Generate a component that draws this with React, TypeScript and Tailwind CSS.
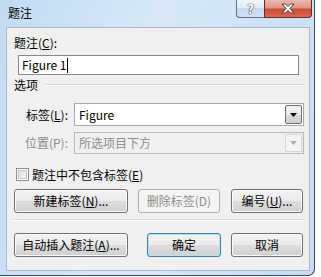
const btn =
  'flex items-center justify-center h-[24px] rounded-[3px] border border-[#707070] bg-[linear-gradient(#f3f3f3_0%,#ebebeb_50%,#dddddd_50%,#d0d0d0_100%)] shadow-[inset_0_0_0_1px_#fbfbfb] text-black'

export default function App() {
  return (
    <div className="w-[321px] h-[277px] bg-white overflow-hidden font-['Noto_Sans_CJK_SC','Liberation_Sans',sans-serif]">
      {/* window frame */}
      <div className="w-[315px] h-[276px] rounded-br-[7px] border-r border-b border-[#404a57] bg-[linear-gradient(100deg,#c3dbf1_0%,#d9e9f8_45%,#c6ddf2_100%)] flex flex-col">
        {/* title bar */}
        <div className="h-[28px] flex items-start shrink-0">
          <span className="ml-[8px] mt-[6px] text-[12px] leading-[14px] text-black">题注</span>
          <div className="ml-auto mr-[2px] flex">
            <div className="w-[28px] h-[18px] rounded-bl-[4px] border border-t-0 border-r-0 border-[#5b6f88] bg-[linear-gradient(#f2f6fb_0%,#dde8f4_50%,#c6d8ec_50%,#d3e2f2_100%)] flex items-center justify-center">
              <span className="text-[13px] leading-[14px] font-bold text-white [text-shadow:0_0_1px_#3d4f66,0_0_1px_#3d4f66,0_0_1px_#3d4f66]">?</span>
            </div>
            <div className="w-[48px] h-[18px] rounded-br-[4px] border border-t-0 border-[#6b2a22] bg-[linear-gradient(#ecb9ae_0%,#e0968a_45%,#cc4c37_55%,#d96a56_100%)] flex items-center justify-center">
              <svg width="14" height="11" viewBox="0 0 14 11">
                <path
                  d="M1 1 H4.5 L7 3.6 L9.5 1 H13 L8.9 5.5 L13 10 H9.5 L7 7.4 L4.5 10 H1 L5.1 5.5 Z"
                  fill="#ffffff"
                  stroke="#4a3a38"
                  strokeWidth="1"
                  strokeLinejoin="round"
                />
              </svg>
            </div>
          </div>
        </div>

        {/* client area */}
        <div className="ml-[7px] w-[302px] h-[242px] bg-[#f0f0f0] shadow-[0_0_0_1px_#a6b9ce] flex flex-col text-[12px] leading-[14px] text-black">
          <div className="mt-[8px] ml-[7px] h-[14px]">
            题注(<span className="underline">C</span>):
          </div>
          <div className="mt-[5px] ml-[11px] w-[281px] h-[20px] bg-white border border-[#8a8a8a] flex items-center pl-[3px]">
            <span>Figure 1</span>
            <span className="w-px h-[15px] bg-black" />
          </div>

          <div className="mt-[3px] ml-[7px] h-[14px] flex items-center">
            <span>选项</span>
            <div className="ml-[7px] w-[260px] h-[2px] border-t border-[#d5d5d5] border-b-white border-b" />
          </div>

          {/* label combo */}
          <div className="mt-[11px] h-[23px] flex items-center">
            <span className="w-[61px] text-right">
              标签(<span className="underline">L</span>):
            </span>
            <div className="ml-[6px] w-[230px] h-[23px] bg-white border border-[#a9a9a9] flex items-stretch">
              <span className="flex-1 flex items-center pl-[4px]">Figure</span>
              <div className="w-[17px] m-[1px] ml-0 rounded-[2px] border border-[#707070] bg-[linear-gradient(#f3f3f3_0%,#ebebeb_50%,#dddddd_50%,#cfcfcf_100%)] flex items-center justify-center">
                <svg width="7" height="4" viewBox="0 0 7 4">
                  <path d="M0 0 H7 L3.5 4 Z" fill="#000" />
                </svg>
              </div>
            </div>
          </div>

          {/* position combo (disabled) */}
          <div className="mt-[6px] h-[22px] flex items-center text-[#8d8d8d]">
            <span className="w-[61px] text-right">位置(P):</span>
            <div className="ml-[6px] w-[230px] h-[22px] bg-[#f0f0f0] border border-[#b8b8b8] flex items-stretch">
              <span className="flex-1 flex items-center pl-[4px]">所选项目下方</span>
              <div className="w-[17px] m-[1px] ml-0 border border-[#d6d6d6] bg-[#f4f4f4] flex items-center justify-center">
                <svg width="7" height="4" viewBox="0 0 7 4">
                  <path d="M0 0 H7 L3.5 4 Z" fill="#b0b0b0" />
                </svg>
              </div>
            </div>
          </div>

          {/* checkbox */}
          <div className="mt-[14px] ml-[9px] h-[13px] flex items-center">
            <div className="w-[13px] h-[13px] border border-[#8e8f8f] bg-white p-[1px]">
              <div className="w-full h-full border border-[#c4c9cf] bg-[linear-gradient(135deg,#dcdfe3_0%,#f7f7f7_100%)]" />
            </div>
            <span className="ml-[3px]">
              题注中不包含标签(<span className="underline">E</span>)
            </span>
          </div>

          {/* button row 1 */}
          <div className="mt-[8px] ml-[7px] flex">
            <button className={`${btn} w-[114px]`}>
              新建标签(<span className="underline">N</span>)...
            </button>
            <button className="ml-[10px] w-[82px] h-[24px] flex items-center justify-center rounded-[3px] border border-[#adb2b5] bg-[#f4f4f4] text-[#8d8d8d]">
              删除标签(D)
            </button>
            <button className={`${btn} ml-[11px] w-[72px]`}>
              编号(<span className="underline">U</span>)...
            </button>
          </div>

          <div className="mt-[6px] ml-[7px] w-[290px] h-[2px] border-t border-[#d5d5d5] border-b border-b-white" />

          {/* button row 2 */}
          <div className="mt-[12px] ml-[7px] flex">
            <button className={`${btn} w-[114px]`}>
              自动插入题注(<span className="underline">A</span>)...
            </button>
            <button className="ml-[19px] w-[74px] h-[24px] flex items-center justify-center rounded-[3px] border border-[#3c7fb1] bg-[linear-gradient(#f3f3f3_0%,#ebebeb_50%,#dddddd_50%,#d0d0d0_100%)] shadow-[inset_0_0_0_1px_#b2e1f8] text-black">
              确定
            </button>
            <button className={`${btn} ml-[10px] w-[72px]`}>取消</button>
          </div>
        </div>
      </div>
    </div>
  )
}
